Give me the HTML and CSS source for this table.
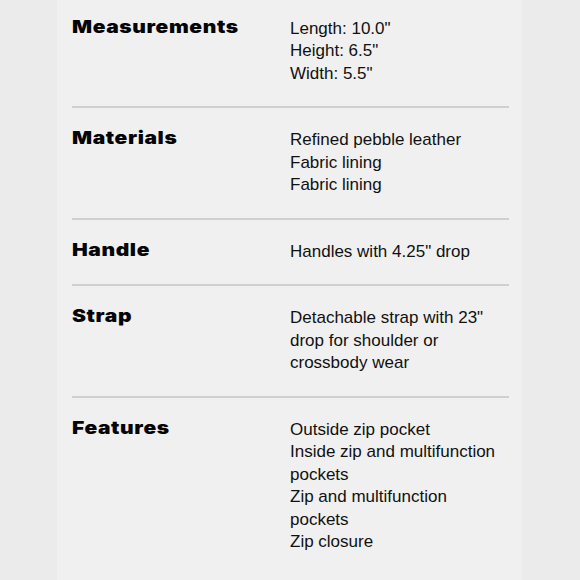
FILE: index.html
```html
<!DOCTYPE html>
<html>
<head>
<meta charset="utf-8">
<link rel="stylesheet" href="styles.css">
</head>
<body>
<div class="panel">
  <div class="specs">
    <div class="row first">
      <div class="label"><span class="label-text">Measurements</span></div>
      <div class="value"><div>Length: 10.0"</div><div>Height: 6.5"</div><div>Width: 5.5"</div></div>
    </div>
    <div class="row">
      <div class="label"><span class="label-text">Materials</span></div>
      <div class="value"><div>Refined pebble leather</div><div>Fabric lining</div><div>Fabric lining</div></div>
    </div>
    <div class="row">
      <div class="label"><span class="label-text">Handle</span></div>
      <div class="value"><div>Handles with 4.25" drop</div></div>
    </div>
    <div class="row">
      <div class="label"><span class="label-text">Strap</span></div>
      <div class="value"><div>Detachable strap with 23" drop for shoulder or crossbody wear</div></div>
    </div>
    <div class="row last">
      <div class="label"><span class="label-text">Features</span></div>
      <div class="value"><div>Outside zip pocket</div><div>Inside zip and multifunction pockets</div><div>Zip and multifunction pockets</div><div>Zip closure</div></div>
    </div>
  </div>
</div>
</body>
</html>
```
FILE: styles.css
```css
html, body {
  margin: 0;
  padding: 0;
  background: #ebebeb;
  height: 580px;
  overflow: hidden;
}
.panel {
  margin-left: 57px;
  width: 465px;
  height: 580px;
  background: #f0f0f0;
  padding-left: 15px;
  box-sizing: border-box;
}
.specs {
  width: 437px;
}
.row {
  display: grid;
  grid-template-columns: 218px 215px;
  padding: 21px 0 21px;
  border-bottom: 2px solid #d0d0d0;
}
.row.first { padding-top: 17.5px; }
.row.last { border-bottom: none; }
.label {
  font-family: Inter, "DejaVu Sans", sans-serif;
  font-weight: 900;
  font-size: 17.5px;
  letter-spacing: 0.5px;
  color: #050505;
  line-height: 18px;
}
.label-text {
  display: inline-block;
  transform: scaleX(1.2);
  transform-origin: left center;
}
.value {
  font-family: "Liberation Sans", Arial, sans-serif;
  font-size: 17px;
  line-height: 22.5px;
  color: #111;
}
```
